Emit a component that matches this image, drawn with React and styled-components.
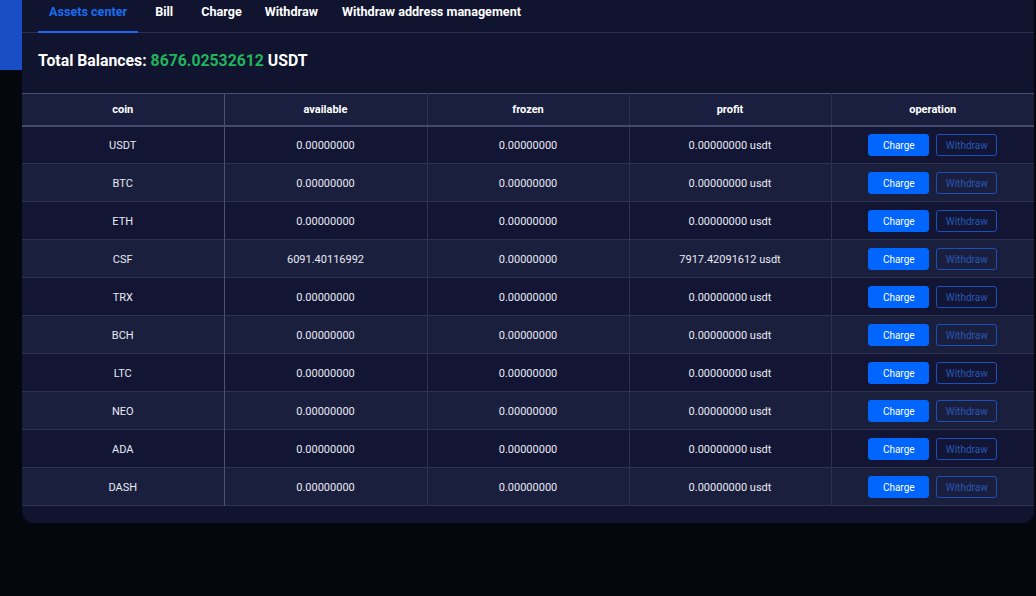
import React from "react";
import styled, { createGlobalStyle } from "styled-components";

const GlobalStyle = createGlobalStyle`
	html, body {
		margin: 0;
		padding: 0;
		background: #05070f;
		font-family: Roboto, "Liberation Sans", Arial, sans-serif;
	}
	* {
		box-sizing: border-box;
	}
`;

const Page = styled.div`
	position: relative;
	width: 1036px;
	height: 596px;
	padding: 0 2px 0 22px;
	overflow: hidden;

	&::before {
		content: "";
		position: absolute;
		left: 0;
		top: 0;
		width: 22px;
		height: 70px;
		background: #1a4ec6;
	}
`;

const Card = styled.div`
	position: relative;
	width: 1012px;
	background: #10142f;
	border-radius: 0 0 12px 12px;
	padding-bottom: 17px;
`;

const Tabs = styled.nav`
	display: flex;
	align-items: stretch;
	height: 33px;
	padding-left: 16px;
	border-bottom: 1px solid #2a3150;
`;

const Tab = styled.div`
	padding: 4px 11px 0;
	margin-right: ${props => props.gap || 2}px;
	font-size: 12.6px;
	font-weight: 700;
	line-height: 16px;
	color: ${props => (props.active ? "#1a6cf0" : "#ffffff")};
	border-bottom: 2px solid ${props => (props.active ? "#1a6cf0" : "transparent")};
	margin-bottom: -1px;
`;

const Title = styled.h2`
	margin: 0;
	padding: 18px 16px 22px;
	font-size: 15.8px;
	font-weight: 700;
	line-height: 20px;
	color: #ffffff;
`;

const Green = styled.span`
	color: #21b45d;
`;

const Table = styled.table`
	width: 100%;
	border-collapse: collapse;
	table-layout: fixed;
	color: #e8eaf2;
	font-size: 11px;
`;

const Th = styled.th`
	height: 32px;
	padding: 0;
	font-weight: 700;
	color: #ffffff;
	background: #1a1f40;
	border-top: 1px solid #4a5173;
	border-bottom: 2px solid #434a6b;
	border-right: 1px solid ${props => (props.bright ? "#4a5173" : "#2c3250")};
	&:last-child {
		border-right: none;
	}
`;

const Tr = styled.tr`
	background: ${props => (props.odd ? "#1b1f3e" : "#121634")};
	border-top: 1px solid ${props => (props.bright ? "#4a5173" : "#2c3250")};
	border-bottom: 1px solid #2c3250;
`;

const Td = styled.td`
	height: 38px;
	padding: 0;
	padding-top: 1px;
	text-align: center;
	border-right: 1px solid ${props => (props.bright ? "#4a5173" : "#2c3250")};
	&:last-child {
		border-right: none;
	}
`;

const Ops = styled.div`
	display: flex;
	justify-content: center;
	gap: 7px;
`;

const Button = styled.button`
	width: 61px;
	height: 22px;
	padding: 0;
	border-radius: 3px;
	font-family: inherit;
	font-size: 10px;
	cursor: pointer;
	color: ${props => (props.outline ? "#2656b8" : "#ffffff")};
	background: ${props => (props.outline ? "transparent" : "#0066ff")};
	border: 1px solid ${props => (props.outline ? "#1d4fb8" : "#0066ff")};
`;

const coins = [
	{ coin: "USDT", available: "0.00000000", profit: "0.00000000" },
	{ coin: "BTC", available: "0.00000000", profit: "0.00000000" },
	{ coin: "ETH", available: "0.00000000", profit: "0.00000000" },
	{ coin: "CSF", available: "6091.40116992", profit: "7917.42091612" },
	{ coin: "TRX", available: "0.00000000", profit: "0.00000000" },
	{ coin: "BCH", available: "0.00000000", profit: "0.00000000" },
	{ coin: "LTC", available: "0.00000000", profit: "0.00000000" },
	{ coin: "NEO", available: "0.00000000", profit: "0.00000000" },
	{ coin: "ADA", available: "0.00000000", profit: "0.00000000" },
	{ coin: "DASH", available: "0.00000000", profit: "0.00000000" },
];

const App = () => {
	return (
		<Page>
			<GlobalStyle />
			<Card>
				<Tabs>
					<Tab active gap={6}>Assets center</Tab>
					<Tab gap={6}>Bill</Tab>
					<Tab gap={1}>Charge</Tab>
					<Tab gap={0}>Withdraw</Tab>
					<Tab>Withdraw address management</Tab>
				</Tabs>

				<Title>
					Total Balances: <Green>8676.02532612</Green> USDT
				</Title>

				<Table>
					<colgroup>
						<col style={{ width: 202 }} />
						<col style={{ width: 203 }} />
						<col style={{ width: 202 }} />
						<col style={{ width: 202 }} />
						<col />
					</colgroup>
					<thead>
						<tr>
							<Th bright>coin</Th>
							<Th>available</Th>
							<Th>frozen</Th>
							<Th>profit</Th>
							<Th>operation</Th>
						</tr>
					</thead>
					<tbody>
						{coins.map((c, i) => (
							<Tr key={c.coin} odd={i % 2 === 1} bright={i === coins.length - 1}>
								<Td bright>{c.coin}</Td>
								<Td>{c.available}</Td>
								<Td>0.00000000</Td>
								<Td>{c.profit} usdt</Td>
								<Td>
									<Ops>
										<Button>Charge</Button>
										<Button outline>Withdraw</Button>
									</Ops>
								</Td>
							</Tr>
						))}
					</tbody>
				</Table>
			</Card>
		</Page>
	);
};

export default App;
